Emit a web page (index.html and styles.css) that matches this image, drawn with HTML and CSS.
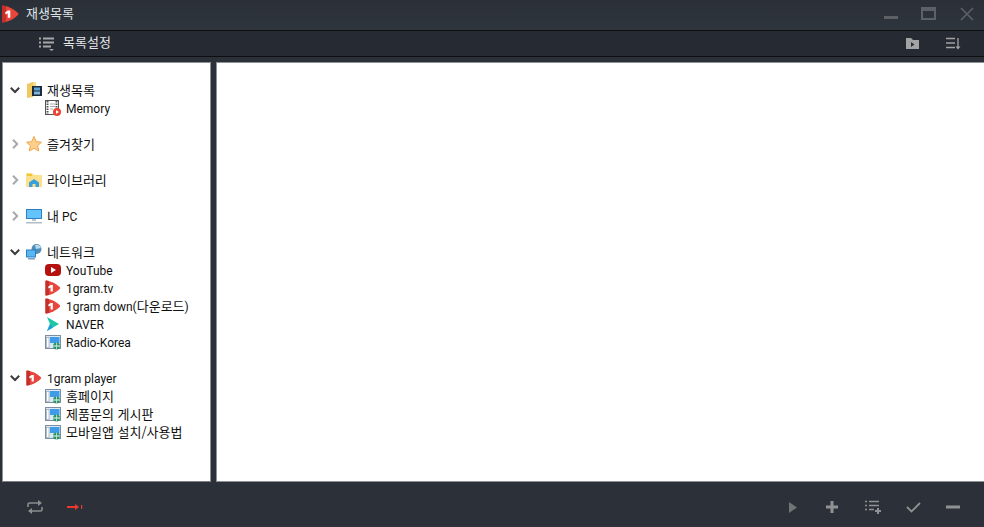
FILE: index.html
```html
<!DOCTYPE html>
<html lang="ko">
<head>
<meta charset="utf-8">
<title>재생목록</title>
<link rel="stylesheet" href="styles.css">
</head>
<body>
<svg class="defs" width="0" height="0" aria-hidden="true">
  <defs>
    <symbol id="logo" viewBox="1 0 17 18">
      <path d="M1 1.500Q1 .5 2 .5Q11 2 17 8Q18 9 17 10Q11 16 2 17.500Q1 17.500 1 16.500Z" fill="#e8453c"/>
      <path d="M1 1.500Q1 .5 2 .5L5 1.200V16.800L2 17.500Q1 17.500 1 16.500Z" fill="#c42f2a"/>
      <path d="M4 7.500 6.800 5.500H9.300V12.800H6.800V8.300L4.800 9.500Z" fill="#fff"/>
    </symbol>
    <symbol id="web" viewBox="0 0 16 16">
      <rect x=".5" y="1.500" width="15" height="13" fill="#dbe7f2" stroke="#7d8ea0"/>
      <rect x="5" y="3" width="9.500" height="6" fill="#3d9be8"/>
      <rect x="1.500" y="3.500" width="2.500" height="10" fill="#fff" stroke="#8899aa" stroke-width=".6"/>
      <circle cx="11.500" cy="12" r="3.500" fill="#2f8f68"/>
      <path d="M8 12H15" stroke="#e6fff5" stroke-width="1"/>
      <path d="M11.500 8.500V15.500" stroke="#bff0dc" stroke-width=".8"/>
    </symbol>
    <symbol id="chev-d" viewBox="0 0 10 10"><path d="M.8 2.800 5 7 9.200 2.800" fill="none" stroke="#3c3c3c" stroke-width="2"/></symbol>
    <symbol id="chev-r" viewBox="0 0 10 10"><path d="M3 .8 7.200 5 3 9.200" fill="none" stroke="#a8a8a8" stroke-width="2"/></symbol>
  </defs>
</svg>

<div class="app">
  <header class="titlebar">
    <svg class="logo-title"><use href="#logo"/></svg>
    <span class="title kr">재생목록</span>
    <div class="winctl">
      <svg width="16" height="14" viewBox="0 0 16 14"><rect x="1" y="9" width="14" height="3" fill="#5d6165"/></svg>
      <svg width="16" height="14" viewBox="0 0 16 14"><rect x="1" y="1" width="13" height="11" fill="none" stroke="#5d6165" stroke-width="2"/><rect x="1" y="1" width="13" height="3" fill="#5d6165"/></svg>
      <svg width="16" height="14" viewBox="0 0 16 14"><path d="M2 1 14 13M14 1 2 13" stroke="#5d6165" stroke-width="1.600"/></svg>
    </div>
  </header>

  <div class="toolbar">
    <svg class="tb-list" width="16" height="14" viewBox="0 0 16 14">
      <path d="M0 1.500H2M0 5.500H2M0 9.500H2M4 1.500H15M4 5.500H15M4 9.500H12" stroke="#a5a7a9" stroke-width="1.800"/>
      <path d="M10 12H15L12.500 14Z" fill="#a5a7a9"/>
    </svg>
    <span class="tb-label kr">목록설정</span>
    <div class="tb-right">
      <svg width="14" height="13" viewBox="0 0 14 13"><path d="M0 1H5L7 3H13V12H0Z" fill="#a3a3a3"/><path d="M5 5 8.500 7.500 5 10Z" fill="#2a2e36"/></svg>
      <svg width="15" height="13" viewBox="0 0 15 13"><path d="M0 1.500H9M0 6H9M0 10.500H9" stroke="#a3a3a3" stroke-width="1.600"/><path d="M12 1V11" stroke="#a3a3a3" stroke-width="1.300"/><path d="M9.500 9.500H14.500L12 12.500Z" fill="#a3a3a3"/></svg>
    </div>
  </div>

  <main class="panes">
    <nav class="tree">
      <div class="row">
        <svg class="chev"><use href="#chev-d"/></svg>
        <svg class="ico" viewBox="0 0 16 16"><path d="M1 2 7 0V15L1 16Z" fill="#f0c760"/><path d="M7 0H10V4H7Z" fill="#f7dc8e"/><rect x="6" y="4" width="10" height="10" fill="#1d2a38"/><rect x="8" y="5.500" width="6" height="3" fill="#5da3d6"/><rect x="8" y="9.500" width="6" height="3" fill="#7fb5dc"/></svg>
        <span class="kr">재생목록</span>
      </div>
      <div class="row child">
        <svg class="ico" viewBox="0 0 16 16"><rect x=".5" y=".5" width="13" height="14" fill="#fff" stroke="#555"/><path d="M2.500 1V14M11.500 1V14" stroke="#555" stroke-width="2" stroke-dasharray="1.500 1"/><path d="M5 4H10M5 6.500H10M5 9H8" stroke="#aaa"/><circle cx="12" cy="12" r="4" fill="#ea4335"/><path d="M11 10 14 12 11 14Z" fill="#fff"/></svg>
        <span class="lat">Memory</span>
      </div>
      <div class="row gap"></div>
      <div class="row">
        <svg class="chev"><use href="#chev-r"/></svg>
        <svg class="ico" viewBox="0 0 16 16"><path d="M8 .5 10.300 5.700 15.500 6.200 11.600 9.800 12.800 15 8 12.300 3.200 15 4.400 9.800 .5 6.200 5.700 5.700Z" fill="#fcd08a" stroke="#eca64c" stroke-width="1"/></svg>
        <span class="kr">즐겨찾기</span>
      </div>
      <div class="row gap"></div>
      <div class="row">
        <svg class="chev"><use href="#chev-r"/></svg>
        <svg class="ico" viewBox="0 0 16 16"><path d="M0 1H6L8 3H16V15H0Z" fill="#fbe08e"/><path d="M1 2H6V4H1Z" fill="#f4c430"/><path d="M3 15V10.500L8 7 13 10.500V15H9.500V12H6.500V15Z" fill="#3aa0dc"/></svg>
        <span class="kr">라이브러리</span>
      </div>
      <div class="row gap"></div>
      <div class="row">
        <svg class="chev"><use href="#chev-r"/></svg>
        <svg class="ico" viewBox="0 0 16 16"><rect x="0" y="1" width="16" height="10" fill="#2f7fc4"/><rect x="1" y="2" width="14" height="8" fill="#63c4fb"/><rect x="6" y="11" width="4" height="2" fill="#b9c4cf"/><rect x="0" y="14" width="16" height="1.500" fill="#b3bdc7"/></svg>
        <span><span class="kr">내</span> PC</span>
      </div>
      <div class="row gap"></div>
      <div class="row">
        <svg class="chev"><use href="#chev-d"/></svg>
        <svg class="ico" viewBox="0 0 16 16"><circle cx="10.500" cy="5" r="5" fill="#4e8fb8"/><path d="M9 1A5 5 0 0 1 15 4L10 5Z" fill="#bcd9ea"/><rect x="0" y="5.500" width="10" height="8" fill="#2c7cc2"/><rect x="1" y="6.500" width="8" height="6" fill="#58b8f2"/><rect x="2" y="14" width="7" height="1.500" fill="#7aa0c0"/></svg>
        <span class="kr">네트워크</span>
      </div>
      <div class="row child">
        <svg class="ico" viewBox="0 0 16 16"><rect x="0" y="2" width="16" height="12" rx="4" fill="#b5120f"/><path d="M6 5 11 8 6 11Z" fill="#fff"/></svg>
        <span class="lat">YouTube</span>
      </div>
      <div class="row child"><svg class="ico"><use href="#logo"/></svg><span class="lat">1gram.tv</span></div>
      <div class="row child"><svg class="ico"><use href="#logo"/></svg><span>1gram down(<span class="kr">다운로드</span>)</span></div>
      <div class="row child">
        <svg class="ico" viewBox="0 0 16 16"><path d="M2 1 14 8 2 15 5 8Z" fill="#1cc7a5"/><path d="M2 15 5 8 8 11.500Z" fill="#1e9ee0"/></svg>
        <span class="lat">NAVER</span>
      </div>
      <div class="row child"><svg class="ico"><use href="#web"/></svg><span class="lat">Radio-Korea</span></div>
      <div class="row gap"></div>
      <div class="row">
        <svg class="chev"><use href="#chev-d"/></svg>
        <svg class="ico"><use href="#logo"/></svg>
        <span class="lat">1gram player</span>
      </div>
      <div class="row child"><svg class="ico"><use href="#web"/></svg><span class="kr">홈페이지</span></div>
      <div class="row child"><svg class="ico"><use href="#web"/></svg><span class="kr">제품문의 게시판</span></div>
      <div class="row child"><svg class="ico"><use href="#web"/></svg><span class="kr">모바일앱 설치/사용법</span></div>
    </nav>
    <section class="content"></section>
  </main>

  <footer class="bottombar">
    <div class="bb-left">
      <svg width="16" height="14" viewBox="0 0 16 14"><path d="M1 7V4.500Q1 3 2.500 3H13M15 7V9.500Q15 11 13.500 11H3" fill="none" stroke="#8b8d8f" stroke-width="1.600"/><path d="M11 0 15 3 11 6ZM5 8 1 11 5 14Z" fill="#8b8d8f"/></svg>
      <svg width="16" height="8" viewBox="0 0 16 8"><path d="M0 4H11" stroke="#e8382f" stroke-width="2"/><path d="M8 1 12 4 8 7Z" fill="#e8382f"/><rect x="14" y="2" width="1.200" height="4" fill="#e8382f"/></svg>
    </div>
    <div class="bb-right">
      <svg class="bb-play" width="10" height="11" viewBox="0 0 10 11"><path d="M1 0 9 5.500 1 11Z" fill="#717477"/></svg>
      <svg class="bb-plus" width="12" height="12" viewBox="0 0 12 12"><path d="M6 0V12M0 6H12" stroke="#8f9193" stroke-width="3"/></svg>
      <svg width="16" height="14" viewBox="0 0 16 14"><path d="M0 1.500H2M0 5.500H2M0 9.500H2M4 1.500H14M4 5.500H14M4 9.500H9" stroke="#8f9193" stroke-width="1.600"/><path d="M13 8V14M10 11H16" stroke="#8f9193" stroke-width="2"/></svg>
      <svg width="15" height="11" viewBox="0 0 15 11"><path d="M1 5 5.500 9.500 14 1" fill="none" stroke="#8f9193" stroke-width="1.800"/></svg>
      <svg width="14" height="4" viewBox="0 0 14 4"><rect width="14" height="3" y=".5" fill="#8f9193"/></svg>
    </div>
  </footer>
</div>
</body>
</html>
```

FILE: styles.css
```css
* { box-sizing: border-box; }
html, body { margin: 0; padding: 0; }
body { font-family: Roboto, "Noto Sans CJK KR", sans-serif; font-size: 12px; background: #2c3139; overflow: hidden; }
.kr { font-family: "Noto Sans CJK KR", sans-serif; font-size: 13px; }
.lat { padding-top: 2px; }
.defs { position: absolute; }
.app { width: 984px; height: 527px; display: flex; flex-direction: column; }

.titlebar { height: 31px; flex: none; display: flex; align-items: center; padding-left: 2px; background: linear-gradient(#2b3037, #2f353d); border-bottom: 1px solid #0d0e10; }
.logo-title { width: 17px; height: 18px; margin-top: -3px; }
.title { margin-left: 7px; margin-bottom: 4px; color: #dfe3e6; line-height: 18px; }
.winctl { margin-left: auto; display: flex; gap: 22px; padding-right: 9px; margin-top: -2px; }

.toolbar { height: 26px; flex: none; display: flex; align-items: center; padding-left: 39px; background: #262a32; border-bottom: 1px solid #0d0e10; }
.tb-label { margin-left: 8px; margin-bottom: 4px; color: #e4e6e8; line-height: 18px; }
.tb-list { margin-top: 1px; }
.tb-right { margin-left: auto; display: flex; gap: 26px; padding-right: 23px; align-items: center; }

.panes { flex: none; height: 425px; padding: 5px 0 0 2px; display: flex; gap: 5px; background: #2c3139; }
.tree { width: 209px; height: 420px; background: #fff; border: 1px solid #8d9094; border-bottom-color: #7c7f83; padding-top: 18px; color: #111; }
.content { width: 768px; height: 420px; background: #fff; border: 1px solid #8d9094; border-right: 0; }

.row { height: 18px; display: flex; align-items: center; line-height: 18px; white-space: nowrap; padding-left: 7px; }
.chev { width: 10px; height: 10px; flex: none; margin-right: 6px; }
.ico { width: 16px; height: 16px; flex: none; margin-right: 5px; }
.child { padding-left: 42px; }

.bottombar { flex: 1; display: flex; align-items: center; justify-content: space-between; padding: 5px 24px 0 27px; background: #2c3139; }
.bb-left { display: flex; align-items: center; gap: 24px; }
.bb-right { display: flex; align-items: center; gap: 25px; }
.bb-play { margin-right: 3px; }
.bb-plus { margin-right: 2px; }
```
